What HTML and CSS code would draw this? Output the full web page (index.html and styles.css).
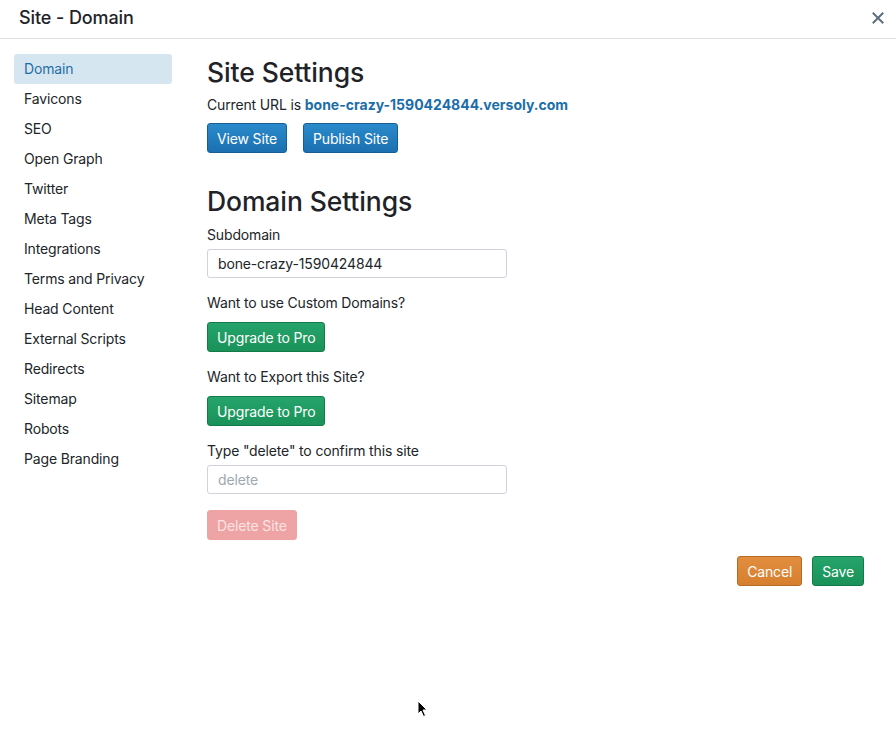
FILE: index.html
```html
<!DOCTYPE html>
<html>
<head>
<meta charset="utf-8">
<title>Site - Domain</title>
<link rel="stylesheet" href="styles.css">
</head>
<body>
<div class="modal">
  <div class="header">
    <div class="title">Site - Domain</div>
    <button class="close" aria-label="Close">
      <svg width="12" height="12" viewBox="0 0 12 12"><path d="M1.5 1.5 L10.5 10.5 M10.5 1.5 L1.5 10.5" stroke="#5f6f7e" stroke-width="2" stroke-linecap="square"/></svg>
    </button>
  </div>
  <div class="body">
    <nav class="sidebar">
      <div class="nav-item active">Domain</div>
      <div class="nav-item">Favicons</div>
      <div class="nav-item">SEO</div>
      <div class="nav-item">Open Graph</div>
      <div class="nav-item">Twitter</div>
      <div class="nav-item">Meta Tags</div>
      <div class="nav-item">Integrations</div>
      <div class="nav-item">Terms and Privacy</div>
      <div class="nav-item">Head Content</div>
      <div class="nav-item">External Scripts</div>
      <div class="nav-item">Redirects</div>
      <div class="nav-item">Sitemap</div>
      <div class="nav-item">Robots</div>
      <div class="nav-item">Page Branding</div>
    </nav>
    <main class="main">
      <h2 class="heading">Site Settings</h2>
      <p class="url">Current URL is <a class="link" href="#">bone-crazy-1590424844.versoly.com</a></p>
      <div class="btn-row">
        <button class="btn btn-blue">View Site</button>
        <button class="btn btn-blue">Publish Site</button>
      </div>
      <h2 class="heading heading-2">Domain Settings</h2>
      <label class="label">Subdomain</label>
      <input class="field" type="text" value="bone-crazy-1590424844">
      <p class="text">Want to use Custom Domains?</p>
      <button class="btn btn-green btn-after">Upgrade to Pro</button>
      <p class="text">Want to Export this Site?</p>
      <button class="btn btn-green btn-after">Upgrade to Pro</button>
      <p class="text">Type "delete" to confirm this site</p>
      <input class="field field-2" type="text" placeholder="delete">
      <button class="btn btn-disabled">Delete Site</button>
    </main>
  </div>
  <div class="footer">
    <button class="btn btn-orange">Cancel</button>
    <button class="btn btn-green">Save</button>
  </div>
</div>
<svg class="cursor" width="12" height="18" viewBox="0 0 12 18"><path d="M1 1 L1 14 L4 11 L6.5 16.5 L8.5 15.5 L6 10 L10 10 Z" fill="#000" stroke="#fff" stroke-width="1"/></svg>
</body>
</html>
```
FILE: styles.css
```css
html, body {
  margin: 0;
  padding: 0;
  background: #fff;
}
body {
  font-family: Inter, "Noto Sans", "Liberation Sans", sans-serif;
  font-size: 14px;
  letter-spacing: -0.15px;
  color: #212529;
  position: relative;
  min-height: 749px;
}
.header {
  height: 38px;
  border-bottom: 1px solid #dee2e6;
  display: flex;
  align-items: center;
  justify-content: space-between;
  padding: 0 12px 0 19px;
  box-sizing: content-box;
}
.title {
  font-size: 18px;
  font-weight: 500;
  letter-spacing: -0.1px;
  color: #1f2328;
  margin-top: -3px;
}
.close {
  border: 0;
  background: none;
  padding: 0;
  width: 12px;
  height: 12px;
  margin-top: -3px;
  display: flex;
}
.body {
  display: flex;
  padding-top: 15px;
}
.sidebar {
  margin-left: 14px;
  width: 158px;
  display: flex;
  flex-direction: column;
}
.nav-item {
  height: 30px;
  line-height: 30px;
  padding-left: 10px;
  border-radius: 3px;
  color: #212529;
}
.nav-item.active {
  background: #d6e6f1;
  color: #1f6ea6;
}
.main {
  margin-left: 35px;
  padding-top: 3px;
  display: flex;
  flex-direction: column;
  align-items: flex-start;
}
.heading {
  margin: 0;
  font-size: 26.5px;
  line-height: 31px;
  font-weight: 500;
  letter-spacing: -0.1px;
  color: #1f2328;
}
.heading-2 {
  margin-top: 33px;
}
.url {
  margin: 6px 0 0;
  line-height: 21px;
}
.link {
  color: #1b6ea8;
  font-weight: 700;
  letter-spacing: 0;
  text-decoration: none;
}
.btn-row {
  display: flex;
  gap: 16px;
  margin-top: 8px;
}
.btn {
  font-family: inherit;
  font-size: 14px;
  letter-spacing: -0.15px;
  height: 30px;
  padding: 0 9px;
  border-radius: 3px;
  border: 1px solid transparent;
  color: #fff;
  cursor: pointer;
}
.btn-blue {
  background: linear-gradient(#2a8acb, #1b70b0);
  border-color: #175e95;
}
.btn-green {
  background: linear-gradient(#25a46b, #1a9259);
  border-color: #147a4a;
}
.btn-orange {
  background: linear-gradient(#e28e3e, #d6802f);
  border-color: #b56a25;
}
.btn-disabled {
  background: #eea4a4;
  border-color: #eea4a4;
  color: #fbe3e3;
  margin-top: 16px;
}
.label {
  margin-top: 7px;
  line-height: 21px;
}
.field {
  margin-top: 4px;
  width: 300px;
  height: 29px;
  box-sizing: border-box;
  border: 1px solid #ced4da;
  border-radius: 3px;
  padding: 0 10px;
  font-family: inherit;
  font-size: 14px;
  letter-spacing: -0.15px;
  color: #212529;
  outline: none;
}
.field::placeholder {
  color: #a0a8b0;
}
.text {
  margin: 14px 0 0;
  line-height: 21px;
}
.btn-after {
  margin-top: 9px;
}
.footer {
  display: flex;
  justify-content: flex-end;
  gap: 10px;
  padding-right: 32px;
  margin-top: 16px;
}
.cursor {
  position: absolute;
  left: 417px;
  top: 700px;
}
```
